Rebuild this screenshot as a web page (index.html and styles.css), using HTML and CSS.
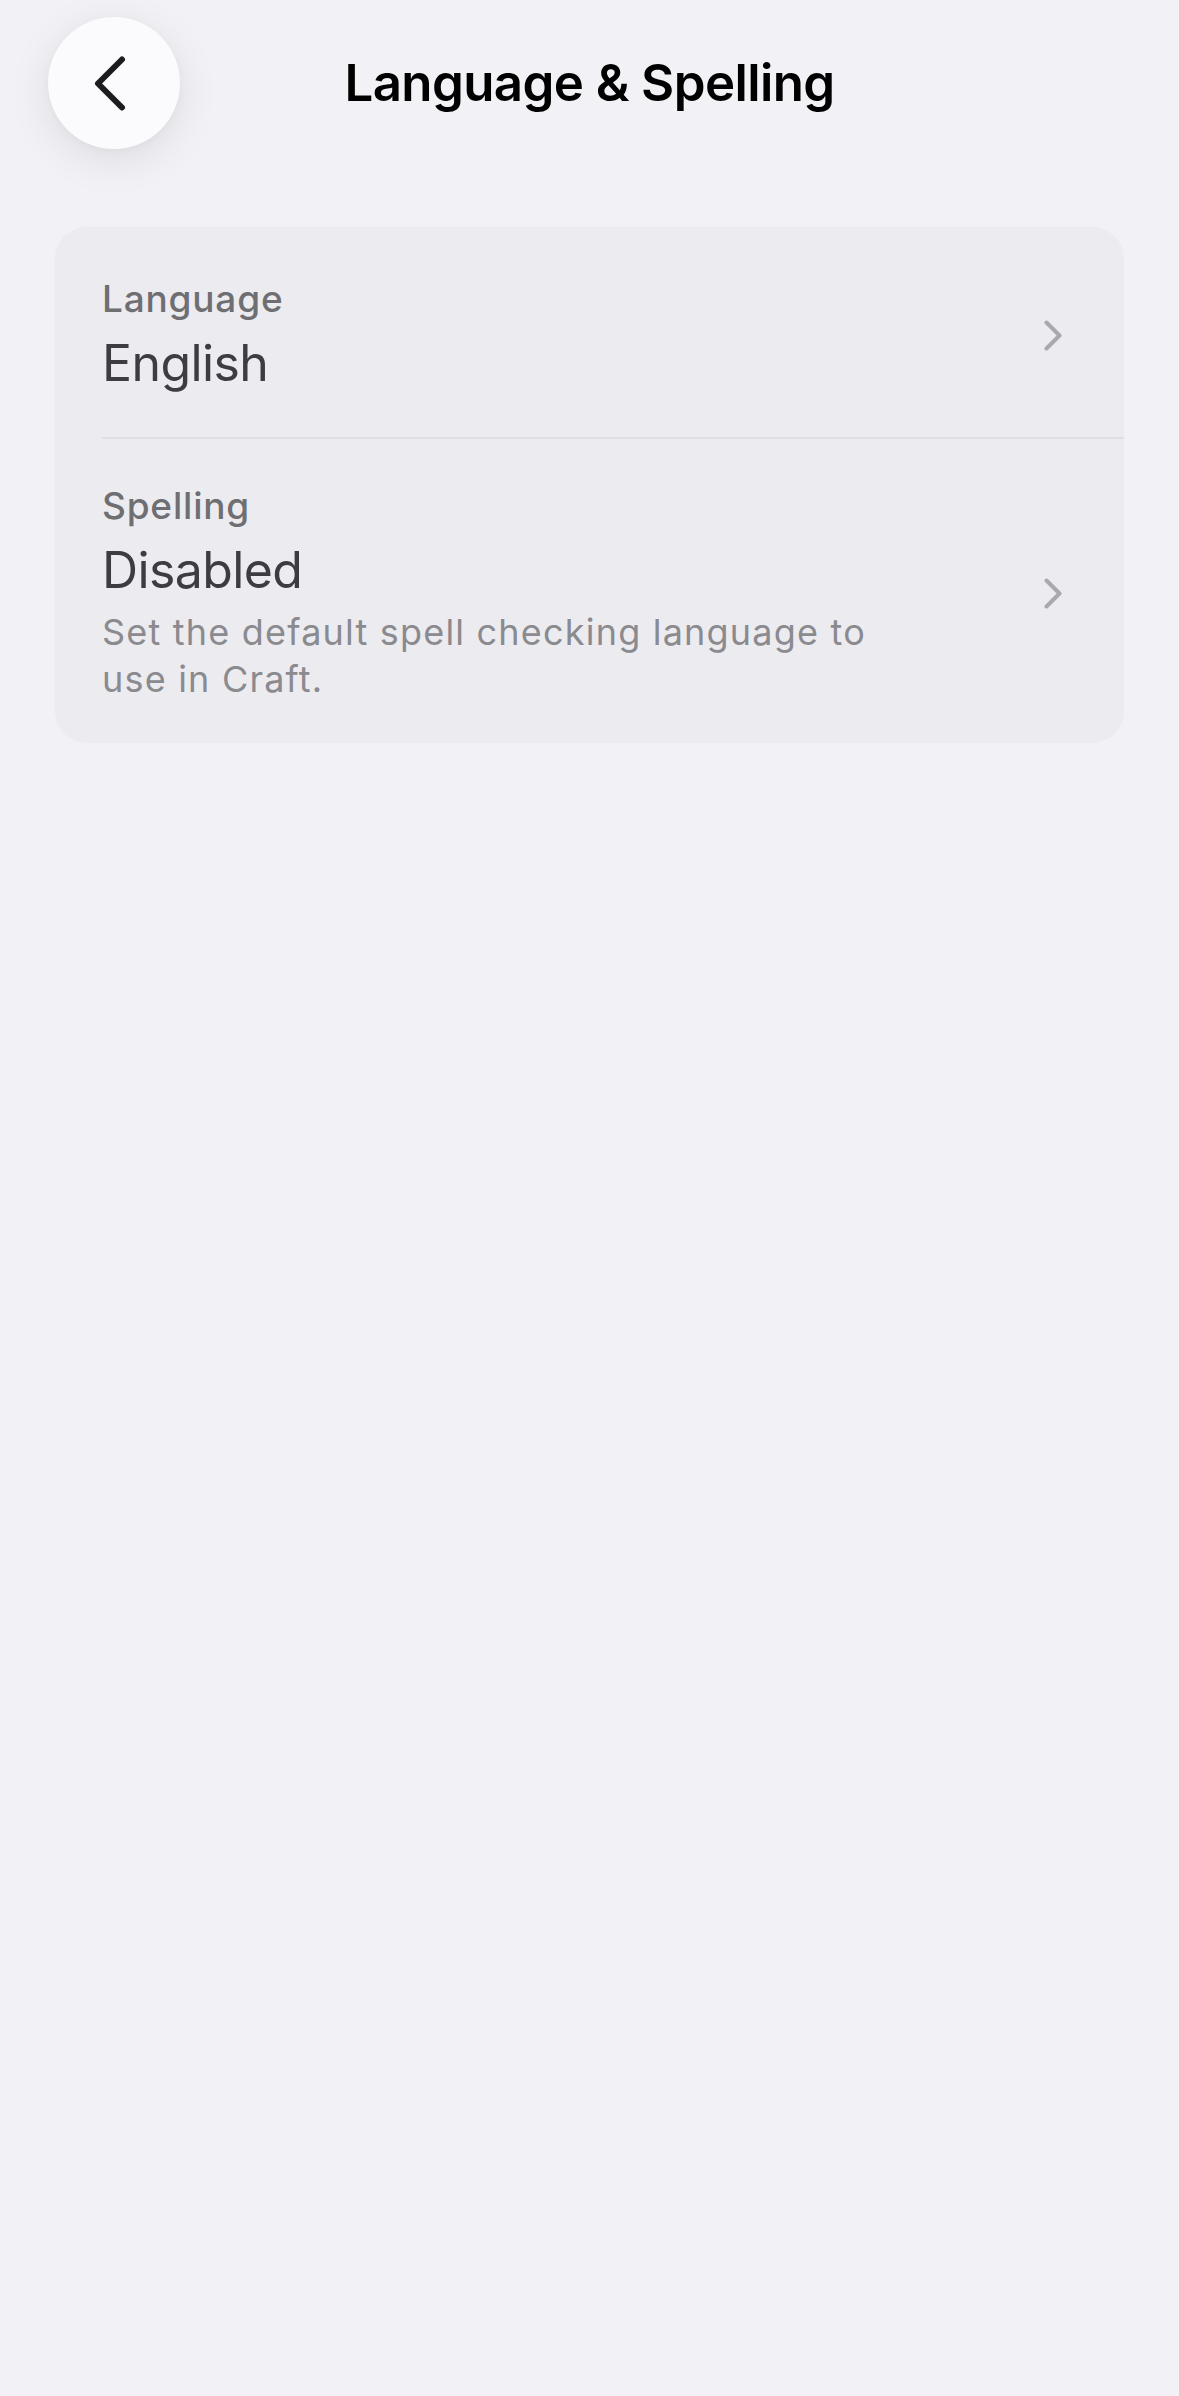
FILE: index.html
```html
<!DOCTYPE html>
<html lang="en">
<head>
<meta charset="utf-8">
<title>Language &amp; Spelling</title>
<link rel="stylesheet" href="styles.css">
</head>
<body>
  <header class="topbar">
    <button class="back" type="button" aria-label="Back">
      <svg class="back-icon" width="32" height="55" viewBox="0 0 32 55" aria-hidden="true">
        <polyline points="28,3.5 4,27.5 28,51.5" />
      </svg>
    </button>
    <h1 class="title">Language &amp; Spelling</h1>
    <span class="spacer"></span>
  </header>

  <main class="content">
    <section class="group">
      <a class="row row-first" href="#">
        <div class="row-inner">
          <div class="row-text">
            <div class="row-label">Language</div>
            <div class="row-value">English</div>
          </div>
          <svg class="chevron" width="18" height="31" viewBox="0 0 18 31" aria-hidden="true">
            <polyline points="2.5,2.5 15.5,15.5 2.5,28.5" />
          </svg>
        </div>
      </a>
      <a class="row row-last" href="#">
        <div class="row-inner">
          <div class="row-text">
            <div class="row-label">Spelling</div>
            <div class="row-value">Disabled</div>
            <p class="row-desc">Set the default spell checking language to use in Craft.</p>
          </div>
          <svg class="chevron" width="18" height="31" viewBox="0 0 18 31" aria-hidden="true">
            <polyline points="2.5,2.5 15.5,15.5 2.5,28.5" />
          </svg>
        </div>
      </a>
    </section>
  </main>
</body>
</html>
```

FILE: styles.css
```css
* {
  box-sizing: border-box;
}

html,
body {
  margin: 0;
  padding: 0;
}

body {
  min-height: 2396px;
  background: #f2f2f6;
  font-family: Inter, "Noto Sans", "Liberation Sans", sans-serif;
  color: #000;
}

/* Top navigation bar */
.topbar {
  display: grid;
  grid-template-columns: 1fr auto 1fr;
  align-items: center;
  padding: 17px 48px 0;
}

.back {
  justify-self: start;
  width: 132px;
  height: 132px;
  border: 0;
  border-radius: 50%;
  background: #fbfbfd;
  box-shadow: 0 10px 44px rgba(0, 0, 0, 0.09), 0 2px 8px rgba(0, 0, 0, 0.03);
  display: flex;
  align-items: center;
  justify-content: center;
  padding: 0 8px 0 0;
  cursor: pointer;
}

.back-icon polyline {
  fill: none;
  stroke: #1c1c1e;
  stroke-width: 6;
  stroke-linecap: round;
  stroke-linejoin: round;
}

.title {
  margin: 0;
  font-size: 51px;
  line-height: 62px;
  font-weight: 600;
  letter-spacing: -0.6px;
  color: #000;
  white-space: nowrap;
}

/* Settings group */
.content {
  padding: 78px 55px 0;
}

.group {
  background: #ececf0;
  border-radius: 32px;
  overflow: hidden;
  box-shadow: 0 0 2px rgba(0, 0, 0, 0.02);
}

.row {
  display: block;
  padding-left: 47px;
  text-decoration: none;
  color: inherit;
}

.row-inner {
  display: flex;
  align-items: center;
  padding-right: 62px;
}

.row-first .row-inner {
  padding-top: 50px;
  padding-bottom: 44px;
  border-bottom: 2px solid #dfdfe3;
}

.row-last .row-inner {
  padding-top: 45px;
  padding-bottom: 40px;
}

.row-text {
  flex: 1;
  min-width: 0;
}

.row-label {
  font-size: 37px;
  line-height: 44px;
  font-weight: 500;
  color: #6e6e73;
  letter-spacing: 0.8px;
}

.row-value {
  margin-top: 12px;
  font-size: 50px;
  line-height: 60px;
  font-weight: 400;
  color: #3c3c41;
  letter-spacing: -0.6px;
}

.row-desc {
  margin: 9px 0 0;
  max-width: 790px;
  font-size: 36px;
  line-height: 47px;
  font-weight: 400;
  color: #8a8a8f;
  letter-spacing: 1.2px;
}

.chevron {
  flex: none;
}

.chevron polyline {
  fill: none;
  stroke: #a8a8ad;
  stroke-width: 4;
  stroke-linecap: round;
  stroke-linejoin: round;
}
```
